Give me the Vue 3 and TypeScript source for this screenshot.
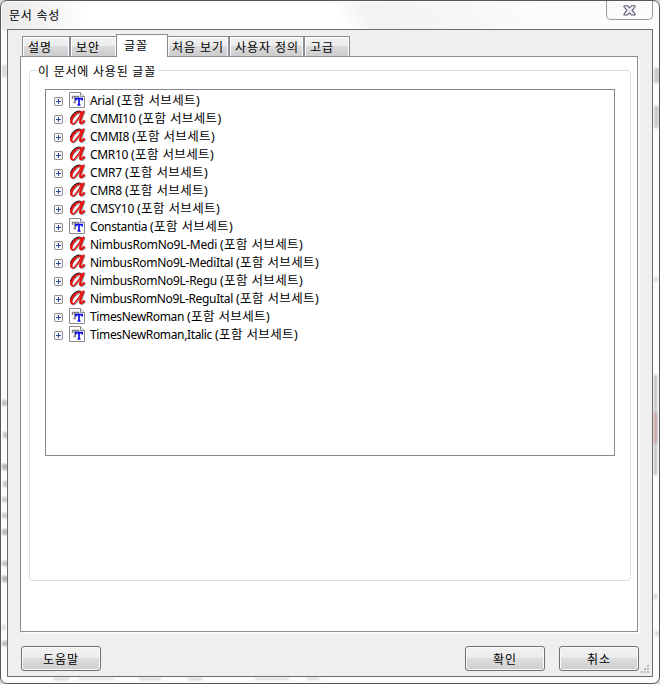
<script setup lang="ts">
import type { Directive } from 'vue'

interface FontRow {
  name: string
  width: number
  type: 'truetype' | 'type1'
}

interface Smudge {
  x: number
  y: number
  w: number
  h: number
  tone: string
}

const tabs = [
  { label: '설명', width: 48, text: 24, pad: 6 },
  { label: '보안', width: 46, text: 24, pad: 6 },
  { label: '글꼴', width: 52, text: 24, pad: 8 },
  { label: '처음 보기', width: 61, text: 52, pad: 5 },
  { label: '사용자 정의', width: 75, text: 64, pad: 6 },
  { label: '고급', width: 46, text: 24, pad: 6 },
]
const activeTab = 2

const fonts: FontRow[] = [
  { name: 'Arial', width: 24, type: 'truetype' },
  { name: 'CMMI10', width: 45.5, type: 'type1' },
  { name: 'CMMI8', width: 39, type: 'type1' },
  { name: 'CMR10', width: 38, type: 'type1' },
  { name: 'CMR7', width: 32, type: 'type1' },
  { name: 'CMR8', width: 32, type: 'type1' },
  { name: 'CMSY10', width: 44, type: 'type1' },
  { name: 'Constantia', width: 57, type: 'truetype' },
  { name: 'NimbusRomNo9L-Medi', width: 127, type: 'type1' },
  { name: 'NimbusRomNo9L-MediItal', width: 143, type: 'type1' },
  { name: 'NimbusRomNo9L-Regu', width: 127, type: 'type1' },
  { name: 'NimbusRomNo9L-ReguItal', width: 143, type: 'type1' },
  { name: 'TimesNewRoman', width: 94, type: 'truetype' },
  { name: 'TimesNewRoman,Italic', width: 122, type: 'truetype' },
]

const smudges: Smudge[] = [
  { x: 1, y: 64, w: 5, h: 12, tone: '#d8d8d8' },
  { x: 1, y: 399, w: 5, h: 6, tone: '#bdbdbd' },
  { x: 2, y: 431, w: 5, h: 6, tone: '#c4c4c4' },
  { x: 1, y: 463, w: 6, h: 6, tone: '#b4b4b4' },
  { x: 2, y: 480, w: 5, h: 6, tone: '#c6c6c6' },
  { x: 1, y: 496, w: 6, h: 5, tone: '#c8c8c8' },
  { x: 1, y: 512, w: 6, h: 5, tone: '#c8c8c8' },
  { x: 1, y: 528, w: 6, h: 6, tone: '#b8b8b8' },
  { x: 1, y: 560, w: 6, h: 5, tone: '#c0c0c0' },
  { x: 1, y: 575, w: 6, h: 6, tone: '#b4b4b4' },
  { x: 1, y: 624, w: 3, h: 5, tone: '#d4d4d4' },
  { x: 1, y: 640, w: 6, h: 5, tone: '#bcbcbc' },
  { x: 653, y: 67, w: 6, h: 15, tone: '#c9cbc9' },
  { x: 653, y: 105, w: 5, h: 22, tone: '#c9cbc9' },
  { x: 653, y: 276, w: 4, h: 5, tone: '#dcdfdd' },
  { x: 653, y: 374, w: 3, h: 100, tone: '#b9bdb9' },
  { x: 653, y: 412, w: 3, h: 30, tone: '#c9a4a4' },
  { x: 653, y: 593, w: 3, h: 5, tone: '#cccccc' },
  { x: 654, y: 630, w: 4, h: 5, tone: '#d8d8d8' },
  { x: 53, y: 677, w: 15, h: 2, tone: '#cfcfcf' },
  { x: 78, y: 677, w: 35, h: 2, tone: '#dddddd' },
  { x: 138, y: 677, w: 22, h: 2, tone: '#d2d2d2' },
  { x: 187, y: 677, w: 14, h: 2, tone: '#cccccc' },
  { x: 254, y: 677, w: 34, h: 2, tone: '#dadada' },
  { x: 306, y: 677, w: 12, h: 2, tone: '#d4d4d4' },
]

// Spreads the letters of an element so that it takes up the given advance width.
const vFit: Directive<HTMLElement, number> = {
  mounted(el, { value }) {
    const natural = el.getBoundingClientRect().width
    const count = (el.textContent ?? '').length
    el.style.letterSpacing = `${(value - natural) / count}px`
  },
}
</script>

<template>
  <div class="window">
    <i
      v-for="(s, i) in smudges"
      :key="i"
      class="smudge"
      :style="{ left: s.x + 'px', top: s.y + 'px', width: s.w + 'px', height: s.h + 'px', background: s.tone }"
    ></i>
    <header class="titlebar">
      <span v-fit="51" class="title">문서 속성</span>
      <button class="close" aria-label="닫기">
        <svg width="13" height="11" viewBox="0 0 13 11">
          <path
            d="M1 .8H4.6L6.5 3 8.4.8H12V2L9 5.4 12 8.8V10H8.4L6.5 7.9 4.6 10H1V8.8L4 5.4 1 2Z"
            fill="#f3f3f5" stroke="#585b70" stroke-width="1.1" stroke-linejoin="round"
          />
        </svg>
      </button>
    </header>

    <main class="client">
      <nav class="tabs">
        <div
          v-for="(tab, i) in tabs"
          :key="tab.label"
          class="tab"
          :class="{ active: i === activeTab, before: i === activeTab - 1, after: i === activeTab + 1 }"
          :style="{ width: tab.width + 'px', paddingLeft: tab.pad - 1 + 'px' }"
        >
          <span v-fit="tab.text">{{ tab.label }}</span>
        </div>
      </nav>

      <section class="panel">
        <fieldset class="group">
          <legend><span v-fit="118">이 문서에 사용된 글꼴</span></legend>
          <ul class="list">
            <li v-for="font in fonts" :key="font.name" class="row">
              <svg class="plus" width="9" height="9" viewBox="0 0 9 9">
                <rect x=".5" y=".5" width="8" height="8" rx=".6" fill="#f5f5f5" stroke="#919191" />
                <path d="M2 4.5H7M4.5 2V7" stroke="#2c4aa0" />
              </svg>
              <svg v-if="font.type === 'truetype'" class="icon" width="17" height="17" viewBox="0 0 17 17">
                <path d="M.5 .5H11.500L15.500 4.500V15.500H.5Z" fill="#fff" stroke="#8b8b8b" />
                <path d="M11.500 .5V4.500H15.500" fill="#eee" stroke="#8b8b8b" />
                <path d="M3.500 7V4.500H9.500V6M6 4.500V10.500M4.500 10.500H7" fill="none" stroke="#808080" stroke-width="1.500" />
                <path d="M6.800 8.500V6.700H13.200V8.500M10 6.700V13M8.500 13H11.500" fill="none" stroke="#0c0cf0" stroke-width="1.700" />
              </svg>
              <svg v-else class="icon" width="17" height="17" viewBox="0 0 17 17">
                <g fill="none" stroke-linecap="round" stroke-linejoin="round">
                  <g stroke="#8b9090" transform="translate(.9 .9)">
                    <path d="M12.500 2.200C8.500 1 4 5 2.300 9.500c-1.100 4 1 5.500 3.500 3.200C9 9.500 11.500 5.500 12.500 2.200" stroke-width="1.300" />
                    <path d="M14.500 1.300C12.500 6 11.300 9 11 12 10.900 14 13 13.300 15 11" stroke-width="1.800" />
                  </g>
                  <path d="M12 1.500C8 0 3.200 4 1.500 9" stroke="#111" stroke-width="1.300" />
                  <g stroke="#f00d0d">
                    <path d="M12.500 2.200C8.500 1 4 5 2.300 9.500c-1.100 4 1 5.500 3.500 3.200C9 9.500 11.500 5.500 12.500 2.200" stroke-width="1.400" />
                    <path d="M6 4.500C4 6.500 1.900 9.500 2.200 12.500" stroke-width="2.200" />
                    <path d="M14.500 1.300C12.500 6 11.300 9 11 12 10.900 14 13 13.300 15 11" stroke-width="2" />
                  </g>
                </g>
              </svg>
              <span v-fit="font.width" class="name">{{ font.name }}</span>
              <span v-fit="83" class="suffix">(포함 서브세트)</span>
            </li>
          </ul>
        </fieldset>
      </section>

      <footer class="actions">
        <button class="btn help"><span v-fit="36">도움말</span></button>
        <button class="btn"><span v-fit="24">확인</span></button>
        <button class="btn"><span v-fit="24">취소</span></button>
      </footer>
      <svg class="grip" width="9" height="9" viewBox="0 0 9 9">
        <path d="M6 0h2v2h-2zM3 3h2v2h-2zM6 3h2v2h-2zM0 6h2v2h-2zM3 6h2v2h-2zM6 6h2v2h-2z" fill="#bcbcbc" />
      </svg>
    </main>
  </div>
</template>

<style>
body {
  background: #d5d5d5;
}
</style>

<style scoped>
.window {
  position: relative;
  box-sizing: border-box;
  width: 660px;
  height: 684px;
  padding: 0 6px 6px;
  overflow: hidden;
  border: 1px solid #5b5759;
  border-radius: 7px;
  background: linear-gradient(120deg, transparent 298px, #f3f3f3 325px, #f5f5f5 380px, #fcfcfc 480px) 0 0 / 100% 29px no-repeat,
    linear-gradient(90deg, #e9e9e9, #fff 90px) 0 0 / 100% 29px no-repeat, #fcfcfc;
  background: linear-gradient(60deg, transparent 298px, #f3f3f3 325px, #f5f5f5 380px, #fcfcfc 480px) 0 0 / 100% 29px no-repeat,
    linear-gradient(90deg, #e9e9e9, #fff 90px) 0 0 / 100% 29px no-repeat, #fcfcfc;
  box-shadow: inset 0 0 0 1px #fff;
  color: #000;
  font: 12px/18px 'Noto Sans', 'Noto Sans CJK KR', sans-serif;
}

.smudge {
  position: absolute;
  filter: blur(1px);
}

.titlebar {
  display: flex;
  justify-content: space-between;
  height: 28px;
}

.title {
  align-self: flex-start;
  margin: 6px 0 0 2px;
  white-space: pre;
}

.close {
  display: flex;
  justify-content: center;
  box-sizing: border-box;
  width: 47px;
  height: 19px;
  padding: 4px 0 0;
  border: 1px solid #999;
  border-top: 0;
  border-radius: 0 0 5px 5px;
  background: #fbfbfb;
}

.client {
  position: relative;
  display: flex;
  flex-direction: column;
  box-sizing: border-box;
  width: 646px;
  height: 648px;
  padding: 4px 14px 0 12px;
  border: 1px solid #6d6d6d;
  background: #efefef;
}

.tabs {
  display: flex;
  align-items: flex-end;
  height: 22px;
  padding-left: 2px;
}

.tab {
  box-sizing: border-box;
  height: 20px;
  flex: none;
  border: 1px solid #898c95;
  border-bottom: 0;
  background: linear-gradient(#f3f3f3, #ebebeb 48%, #dadada 50%, #cdcdcd);
  box-shadow: inset 1px 1px #fff, inset -1px 0 #fbfbfb;
  line-height: 21px;
  white-space: nowrap;
}

.tab.before {
  border-right: 0;
}

.tab.after {
  border-left: 0;
}

.tab.active {
  position: relative;
  z-index: 1;
  height: 23px;
  margin-bottom: -1px;
  background: #fff;
  line-height: 21px;
}

.panel {
  box-sizing: border-box;
  width: 618px;
  height: 576px;
  padding: 5px 6px 0 8px;
  border: 1px solid #898c95;
  background: #fff;
  box-shadow: 2px 2px #f9f9f9;
}

.group {
  box-sizing: border-box;
  width: 602px;
  height: 519px;
  margin: 0;
  padding: 10px 15px 0;
  border: 1px solid #d5dfe5;
  border-radius: 4px;
}

.group legend {
  height: 17px;
  margin-left: -8px;
  padding: 0 2px 0 1px;
  line-height: 20px;
  white-space: nowrap;
}

.list {
  box-sizing: border-box;
  width: 570px;
  height: 367px;
  margin: 0;
  padding: 1px 0 0 8px;
  border: 1px solid #828790;
  list-style: none;
}

.row {
  display: flex;
  align-items: center;
  height: 18px;
  white-space: pre;
}

.plus {
  flex: none;
  margin: 2px 6px 0 0;
}

.icon {
  flex: none;
  margin: 1px 4px 0 0;
}

.name {
  margin: 1px 4px 0 0;
}

.suffix {
  margin-top: 1px;
  font-size: 12.5px;
}

.name + .suffix {
  margin-left: -1px;
}

.actions {
  display: flex;
  gap: 14px;
  margin: 0 -1px 0 1px;
  padding-top: 14px;
}

.btn {
  box-sizing: border-box;
  width: 80px;
  height: 25px;
  padding: 2px 0 0;
  border: 1px solid #707070;
  border-radius: 3px;
  background: linear-gradient(#f2f2f2, #ebebeb 48%, #dddddd 50%, #cfcfcf);
  box-shadow: inset 0 0 0 1px #fafafa;
  color: #000;
  font: inherit;
  white-space: nowrap;
}

.help {
  margin-right: auto;
}

.grip {
  position: absolute;
  right: 2px;
  bottom: 2px;
}
</style>
